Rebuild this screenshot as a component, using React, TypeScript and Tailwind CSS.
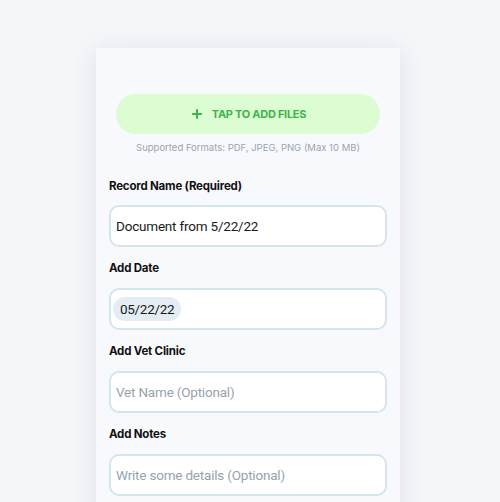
import { Plus } from "lucide-react";

const fields = [
  { label: "Add Vet Clinic", placeholder: "Vet Name (Optional)" },
  { label: "Add Notes", placeholder: "Write some details (Optional)" },
];

const inputFont = { fontFamily: "Roboto, 'Liberation Sans', sans-serif" };

export default function App() {
  return (
    <div
      className="h-[502px] w-[500px] overflow-hidden bg-[#f5f6fa]"
      style={{ fontFamily: "Inter, 'Liberation Sans', sans-serif" }}
    >
      <div className="ml-[96px] mt-[48px] h-[480px] w-[304px] bg-[#f8f9fc] px-[13px] pt-[46px] shadow-[0_4px_24px_rgba(30,40,70,0.10)]">
        <button className="mx-[7px] flex h-[40px] w-[264px] items-center justify-center gap-2 rounded-full bg-[#dcfcd2] text-[11px] font-bold tracking-tight text-[#3fb44c]">
          <Plus className="h-[14px] w-[14px]" strokeWidth={3.5} />
          TAP TO ADD FILES
        </button>
        <p className="mt-[7px] text-center text-[9.5px] leading-[14px] text-[#9aa4b0]">
          Supported Formats: PDF, JPEG, PNG (Max 10 MB)
        </p>

        <div className="mt-[23px] text-[11.5px] font-bold leading-[16px] tracking-[-0.2px] text-[#111]">
          Record Name (Required)
        </div>
        <div
          className="mt-[11px] flex h-[42px] items-center rounded-[10px] border-2 border-[#d3e6ea] bg-white px-[5px] text-[13.5px] tracking-[-0.2px] text-[#1a1a1a]"
          style={inputFont}
        >
          Document from 5/22/22
        </div>

        <div className="mt-[13px] text-[11.5px] font-bold leading-[16px] tracking-[-0.2px] text-[#111]">
          Add Date
        </div>
        <div className="mt-[12px] flex h-[42px] items-center rounded-[10px] border-2 border-[#d3e6ea] bg-white px-[2px]">
          <span
            className="rounded-full bg-[#e5edf4] px-[7px] py-[4px] text-[13.5px] leading-[16px] tracking-[-0.3px] text-[#1a1a1a]"
            style={inputFont}
          >
            05/22/22
          </span>
        </div>

        {fields.map((f) => (
          <div key={f.label}>
            <div className="mt-[13px] text-[11.5px] font-bold leading-[16px] tracking-[-0.2px] text-[#111]">
              {f.label}
            </div>
            <div
              className="mt-[12px] flex h-[42px] items-center rounded-[10px] border-2 border-[#d3e6ea] bg-white px-[5px] text-[13.5px] tracking-[-0.2px] text-[#97a3ad]"
              style={inputFont}
            >
              {f.placeholder}
            </div>
          </div>
        ))}
      </div>
    </div>
  );
}
